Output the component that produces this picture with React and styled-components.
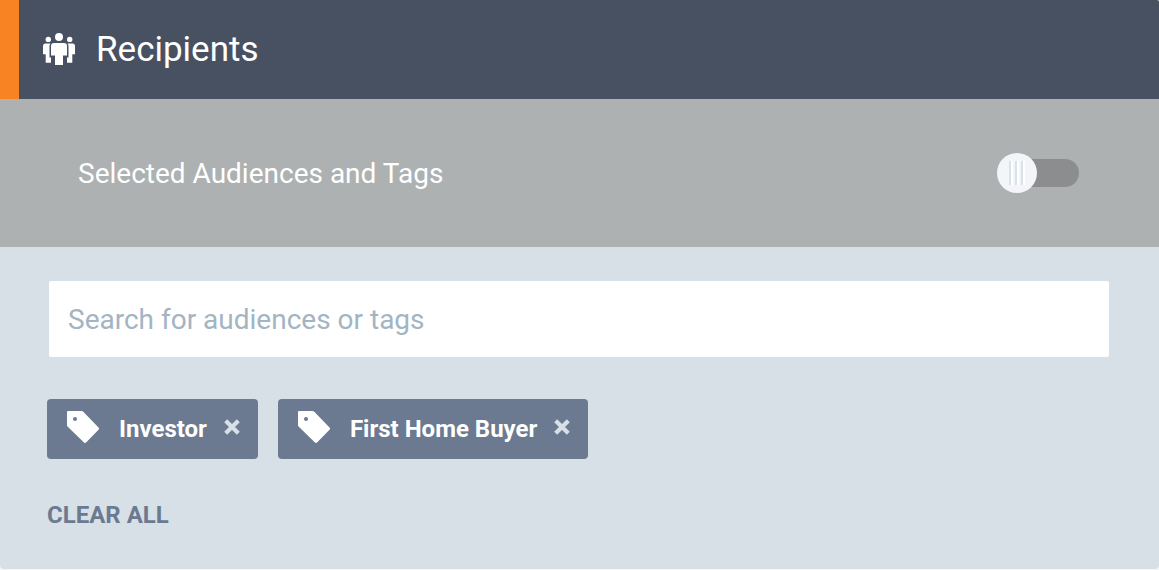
import { useState } from 'react'
import styled, { createGlobalStyle } from 'styled-components'

const GlobalStyle = createGlobalStyle`
  * {
    box-sizing: border-box;
  }

  body {
    margin: 0;
    background: #f4f7f9;
    font-family: Roboto, 'Liberation Sans', sans-serif;
  }

  button,
  input {
    font-family: inherit;
  }
`

const Panel = styled.section`
  position: relative;
  background: #d8e0e7;
  border-radius: 0 2px 4px 4px;
`

const Header = styled.header`
  display: flex;
  align-items: flex-start;
  gap: 21px;
  padding: 33px 24px 32px;
  border-left: 19px solid #f78323;
  border-top-right-radius: 2px;
  background: #485161;
  color: #fff;

  h1 {
    margin: 0;
    font-size: 35px;
    font-weight: 400;
    line-height: 34px;
  }
`

const ToggleRow = styled.label`
  display: flex;
  align-items: flex-start;
  justify-content: space-between;
  padding: 54px 80px 52px 78px;
  background: #adb1b2;
  color: #fff;
  font-size: 28px;
  line-height: 42px;
  cursor: pointer;
`

const Switch = styled.input`
  appearance: none;
  display: flex;
  align-items: center;
  width: 82px;
  height: 40px;
  margin: 0;
  cursor: pointer;

  &::before {
    content: '';
    flex: none;
    width: 40px;
    height: 40px;
    border-radius: 50%;
    background:
      repeating-linear-gradient(90deg, #d8e2ea 0 2px, #fff 2px 4px, #f3f5f8 4px 6px) center / 16px 24px no-repeat,
      #f3f5f8;
    z-index: 1;
  }

  &::after {
    content: '';
    flex: 1;
    height: 28px;
    margin-left: -20px;
    border-radius: 0 14px 14px 0;
    background: #8c8d8f;
  }

  &:checked {
    flex-direction: row-reverse;
  }

  &:checked::after {
    margin: 0 -20px 0 0;
    border-radius: 14px 0 0 14px;
    background: #f78323;
  }
`

const Content = styled.div`
  padding: 34px 50px 36px 47px;
`

const Search = styled.input`
  display: block;
  width: calc(100% - 2px);
  height: 76px;
  margin: 0 0 42px 2px;
  padding: 0 19px;
  border: 0;
  border-radius: 2px;
  background: #fff;
  color: #485161;
  font-size: 28px;

  &::placeholder {
    color: #a3b4c3;
    opacity: 1;
  }
`

const Tags = styled.ul`
  display: flex;
  flex-wrap: wrap;
  gap: 20px;
  margin: 0 0 38px;
  padding: 0;
  list-style: none;
`

const TagItem = styled.li`
  display: flex;
  align-items: center;
  height: 60px;
  padding: 0 18px 0 20px;
  border-radius: 4px;
  background: #6b7a90;
  color: #fff;
  font-size: 24px;
  font-weight: 700;

  > svg {
    margin: 0 20px 4px 0;
  }
`

const RemoveButton = styled.button`
  display: flex;
  margin: 0 0 4px 17px;
  padding: 0;
  border: 0;
  background: none;
  color: #d8e0e7;
  cursor: pointer;
`

const ClearButton = styled.button`
  display: block;
  padding: 0;
  border: 0;
  background: none;
  color: #6b7a90;
  font-size: 24px;
  font-weight: 700;
  line-height: 36px;
  text-transform: uppercase;
  cursor: pointer;
`

const Notch = styled.div`
  position: absolute;
  top: 100%;
  left: 50%;
  width: 92px;
  height: 1px;
  margin-left: -46px;
  background: linear-gradient(90deg, transparent, #d8e0e7 10px, #d8e0e7 82px, transparent);
`

const PeopleIcon = () => (
  <svg width='32' height='32' viewBox='0 0 32 32' fill='currentColor' aria-hidden='true'>
    <circle cx='16' cy='4' r='4' />
    <path d='M11 10h10a3 3 0 0 1 3 3v9.500h-4V32h-8v-9.500H8V13a3 3 0 0 1 3-3z' />
    <circle cx='5.300' cy='6.400' r='2.700' />
    <path d='M2.500 10.500H7.500Q6.500 11.500 6.500 13V24.500H8V29.700H2.700V21.300H0V13a2.500 2.500 0 0 1 2.500-2.500z' />
    <circle cx='26.700' cy='6.400' r='2.700' />
    <path d='M29.500 10.500H24.500Q25.500 11.500 25.500 13V24.500H24V29.700H29.300V21.300H32V13a2.500 2.500 0 0 0-2.500-2.500z' />
  </svg>
)

const TagIcon = () => (
  <svg width='32' height='32' viewBox='0 0 32 32' fill='currentColor' fillRule='evenodd' aria-hidden='true'>
    <path d='M1 0H14.500Q15.500 0 16.300.8L31.500 16.600Q32.500 17.700 31.500 18.800L19.300 31.300Q18 32.500 16.700 31.300L.8 15.700Q0 15 0 14V1Q0 0 1 0zM8 6a2 2 0 1 0 0 4 2 2 0 0 0 0-4z' />
  </svg>
)

const CrossIcon = () => (
  <svg width='16' height='16' viewBox='0 0 16 16' stroke='currentColor' strokeWidth='4.200' aria-hidden='true'>
    <path d='M1.700 1.700l12.600 12.600M14.300 1.700L1.700 14.300' />
  </svg>
)

export default function App() {
  const [enabled, setEnabled] = useState(false)
  const [query, setQuery] = useState('')
  const [tags, setTags] = useState(['Investor', 'First Home Buyer'])

  return (
    <>
      <GlobalStyle />
      <Panel>
        <Header>
          <PeopleIcon />
          <h1>Recipients</h1>
        </Header>
        <ToggleRow>
          Selected Audiences and Tags
          <Switch type='checkbox' role='switch' checked={enabled} onChange={e => setEnabled(e.target.checked)} />
        </ToggleRow>
        <Content>
          <Search
            type='text'
            placeholder='Search for audiences or tags'
            aria-label='Search for audiences or tags'
            value={query}
            onChange={e => setQuery(e.target.value)}
          />
          <Tags>
            {tags.map(tag => (
              <TagItem key={tag}>
                <TagIcon />
                {tag}
                <RemoveButton aria-label={`Remove ${tag}`} onClick={() => setTags(tags.filter(t => t !== tag))}>
                  <CrossIcon />
                </RemoveButton>
              </TagItem>
            ))}
          </Tags>
          <ClearButton onClick={() => setTags([])}>Clear all</ClearButton>
        </Content>
        <Notch />
      </Panel>
    </>
  )
}
